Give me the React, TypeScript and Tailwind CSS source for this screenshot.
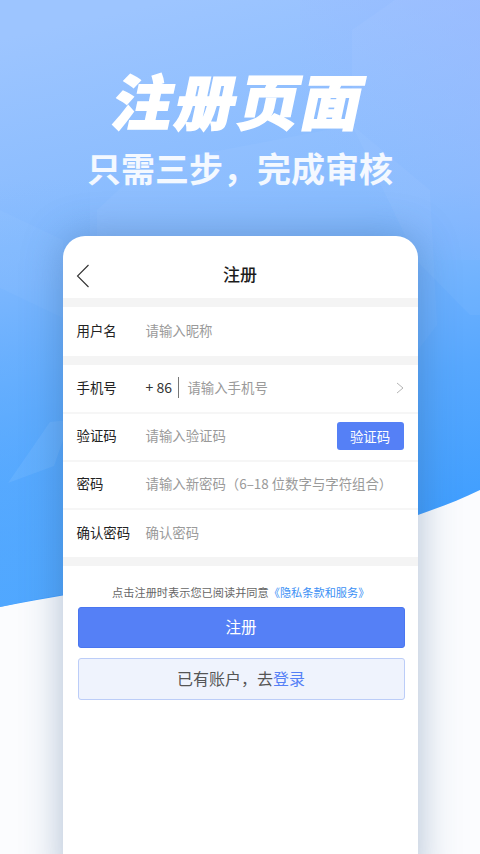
const font = "font-['Noto_Sans_CJK_SC','Noto_Sans',sans-serif]";

function Background() {
  return (
    <svg className="absolute inset-0" width="480" height="854" viewBox="0 0 480 854">
      <defs>
        <linearGradient id="bg" gradientUnits="userSpaceOnUse" x1="170" y1="0" x2="300" y2="570">
          <stop offset="0" stopColor="#9dc5ff" />
          <stop offset="0.42" stopColor="#83b9fe" />
          <stop offset="0.72" stopColor="#58a8fe" />
          <stop offset="1" stopColor="#3c9dff" />
        </linearGradient>
        <linearGradient id="bgLeft" gradientUnits="userSpaceOnUse" x1="0" y1="180" x2="60" y2="560">
          <stop offset="0" stopColor="#5cacff" stopOpacity="0" />
          <stop offset="1" stopColor="#55aaff" stopOpacity="0.75" />
        </linearGradient>
        <linearGradient id="bgRight" gradientUnits="userSpaceOnUse" x1="480" y1="0" x2="310" y2="120">
          <stop offset="0" stopColor="#97b6ff" stopOpacity="0.55" />
          <stop offset="1" stopColor="#97b6ff" stopOpacity="0" />
        </linearGradient>
      </defs>
      <rect width="480" height="854" fill="#fbfcfe" />
      <path d="M0 607 C 170 575 300 560 418 515 C 440 507 460 500 480 490 L480 0 L0 0 Z" fill="url(#bg)" />
      <path d="M0 607 C 30 600 60 595 90 590 L90 180 L0 180 Z" fill="url(#bgLeft)" />
      <rect x="300" width="180" height="260" fill="url(#bgRight)" />
      <path d="M0 288 L63 318 L63 240 L0 210 Z" fill="#ffffff" opacity="0.03" />
      <path d="M8 483 L50 422 L70 420 L54 466 Z" fill="#ffffff" opacity="0.07" />
      <path d="M352 30 L395 0 L480 0 L480 315 L470 315 L418 262 L352 125 Z" fill="#ffffff" opacity="0.04" />
      <path d="M97 210 L145 165 L352 125 L430 190 L437 325 L418 350 L97 350 Z" fill="#ffffff" opacity="0.035" />
    </svg>
  );
}

function Row({ label, children, h = "h-[46.5px]" }: { label: string; children: React.ReactNode; h?: string }) {
  return (
    <div className={`flex items-center px-[14px] pb-[3px] ${h}`}>
      <span className="w-[69px] shrink-0 text-[13.4px] text-[#222222]">{label}</span>
      {children}
    </div>
  );
}

const Ph = ({ children }: { children: React.ReactNode }) => (
  <span className="text-[13.4px] text-[#9a9a9a] whitespace-nowrap">{children}</span>
);

export default function App() {
  return (
    <div className={`relative h-[854px] w-[480px] overflow-hidden ${font}`}>
      <Background />
      <div className="relative flex flex-col items-center">
        <h1 className="mt-[52px] ml-[2px] h-[93px] -skew-x-[12deg] text-[60px] leading-[93px] font-black tracking-[3px] text-white [-webkit-text-stroke:1.5px_white]">
          注册页面
        </h1>
        <p className="h-[45px] text-[34px] leading-[45px] font-bold whitespace-nowrap text-white/90">
          只需三步{"\uFF0C"}完成审核
        </p>
        <div className="mt-[46px] flex h-[650px] w-[355px] flex-col rounded-t-[22px] bg-white shadow-[0_0_40px_rgba(50,90,140,0.38)]">
          <div className="relative flex h-[62px] shrink-0 items-center justify-center">
            <svg className="absolute top-[28px] left-[13px]" width="14" height="24" viewBox="0 0 14 24" fill="none">
              <path d="M12.5 1 L1.5 12 L12.5 23" stroke="#333333" strokeWidth="1.1" />
            </svg>
            <span className="mt-[14px] text-[17px] font-medium text-[#1c1c1c]">注册</span>
          </div>
          <div className="h-[9px] shrink-0 bg-[#f4f4f4]" />
          <Row label="用户名" h="h-[49px]"><Ph>请输入昵称</Ph></Row>
          <div className="h-[9px] shrink-0 bg-[#f4f4f4]" />
          <Row label="手机号" h="h-[47px]">
            <span className="text-[14px] text-[#333333]">+ 86</span>
            <span className="mt-[1px] mr-[8px] ml-[6px] h-[21px] w-[1.5px] bg-[#777777]" />
            <Ph>请输入手机号</Ph>
            <svg className="mt-[1px] ml-auto" width="8" height="12" viewBox="0 0 8 12" fill="none">
              <path d="M1 1 L7 6 L1 11" stroke="#b5b5b5" strokeWidth="1" />
            </svg>
          </Row>
          <div className="h-[1.5px] shrink-0 bg-[#f6f6f6]" />
          <Row label="验证码">
            <Ph>请输入验证码</Ph>
            <span className="mt-[2px] ml-auto flex h-[28px] w-[67px] items-center justify-center rounded-[3px] bg-[#5580f6] text-[13.4px] text-white">
              验证码
            </span>
          </Row>
          <div className="h-[1.5px] shrink-0 bg-[#f6f6f6]" />
          <Row label="密码"><Ph>请输入新密码{"\uFF08"}6–18 位数字与字符组合{"\uFF09"}</Ph></Row>
          <div className="h-[1.5px] shrink-0 bg-[#f6f6f6]" />
          <Row label="确认密码" h="h-[47.5px]"><Ph>确认密码</Ph></Row>
          <div className="h-[9px] shrink-0 bg-[#f4f4f4]" />
          <p className="mt-[18px] ml-[1.5px] text-center text-[11.2px] leading-[16px] whitespace-nowrap text-[#666666]">
            点击注册时表示您已阅读并同意<span className="text-[#3b90f5]">《隐私条款和服务》</span>
          </p>
          <div className="mt-[7px] mr-[13px] ml-[15px] flex h-[41px] items-center justify-center rounded-[3px] border border-[#4a76f0] bg-[#5580f6] pb-[2px] text-[15.5px] text-white">
            注册
          </div>
          <div className="mt-[10px] mr-[13px] ml-[15px] flex h-[42px] items-center justify-center rounded-[3px] border border-[#bccdf8] bg-[#eff3fd] pb-[2px] text-[16px] text-[#555555]">
            已有账户{"\uFF0C"}去<span className="text-[#5580f6]">登录</span>
          </div>
        </div>
      </div>
    </div>
  );
}
